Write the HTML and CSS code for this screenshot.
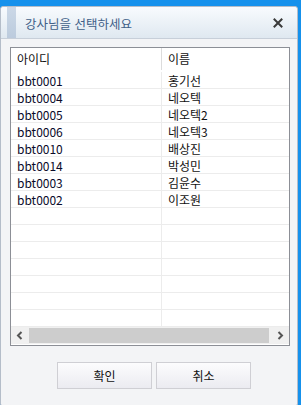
FILE: index.html
```html
<!DOCTYPE html>
<html lang="ko">
<head>
  <meta charset="UTF-8" />
  <meta name="viewport" content="width=device-width, initial-scale=1.0" />
  <title>강사님을 선택하세요</title>
  <link rel="stylesheet" href="styles.css">
</head>
<body>
  <div class="window">
    <div class="title-bar">
      <div class="title-accent"></div>
      <h1 class="title">강사님을 선택하세요</h1>
      <button class="close-button" title="닫기">
        <svg width="10" height="10" viewBox="0 0 10 10">
          <path d="M1.5 1.5 L8.5 8.5 M8.5 1.5 L1.5 8.5" stroke="#3a3a3a" stroke-width="2" stroke-linecap="square" />
        </svg>
      </button>
    </div>

    <div class="content">
      <div class="grid">
        <div class="grid-header">
          <div class="cell col-id">아이디</div>
          <div class="cell col-name">이름</div>
        </div>
        <div class="grid-body">
          <div class="row"><div class="cell col-id">bbt0001</div><div class="cell col-name">홍기선</div></div>
          <div class="row"><div class="cell col-id">bbt0004</div><div class="cell col-name">네오텍</div></div>
          <div class="row"><div class="cell col-id">bbt0005</div><div class="cell col-name">네오텍2</div></div>
          <div class="row"><div class="cell col-id">bbt0006</div><div class="cell col-name">네오텍3</div></div>
          <div class="row"><div class="cell col-id">bbt0010</div><div class="cell col-name">배상진</div></div>
          <div class="row"><div class="cell col-id">bbt0014</div><div class="cell col-name">박성민</div></div>
          <div class="row"><div class="cell col-id">bbt0003</div><div class="cell col-name">김윤수</div></div>
          <div class="row"><div class="cell col-id">bbt0002</div><div class="cell col-name">이조원</div></div>
          <div class="row empty"><div class="cell col-id"></div><div class="cell col-name"></div></div>
          <div class="row empty"><div class="cell col-id"></div><div class="cell col-name"></div></div>
          <div class="row empty"><div class="cell col-id"></div><div class="cell col-name"></div></div>
          <div class="row empty"><div class="cell col-id"></div><div class="cell col-name"></div></div>
          <div class="row empty"><div class="cell col-id"></div><div class="cell col-name"></div></div>
          <div class="row empty"><div class="cell col-id"></div><div class="cell col-name"></div></div>
          <div class="row empty"><div class="cell col-id"></div><div class="cell col-name"></div></div>
        </div>
        <div class="hscroll">
          <div class="scroll-arrow">
            <svg width="8" height="9" viewBox="0 0 8 9"><path d="M5.5 1 L2 4.5 L5.5 8" fill="none" stroke="#555" stroke-width="2" /></svg>
          </div>
          <div class="scroll-track"><div class="scroll-thumb"></div></div>
          <div class="scroll-arrow">
            <svg width="8" height="9" viewBox="0 0 8 9"><path d="M2.5 1 L6 4.5 L2.5 8" fill="none" stroke="#555" stroke-width="2" /></svg>
          </div>
        </div>
      </div>

      <div class="buttons">
        <button class="dialog-button">확인</button>
        <button class="dialog-button">취소</button>
      </div>
    </div>
  </div>
</body>
</html>
```

FILE: styles.css
```css
:root {
  --desktop: #1591ec;
  --window-bg: #f3f4f6;
  --frame: #b4bdc9;
  --title-text: #3f6088;
  --grid-border: #8c8f96;
  --row-line: #ececec;
  --text: #111;
}

body {
  margin: 0;
  background-color: var(--desktop);
  font-family: "Noto Sans CJK KR", "Noto Sans", sans-serif;
  font-size: 12px;
  color: var(--text);
  overflow: hidden;
}

.window {
  margin-top: 6px;
  width: 296px;
  height: 398px;
  background-color: var(--window-bg);
  border: 1px solid var(--frame);
  border-radius: 3px 3px 2px 2px;
  display: flex;
  flex-direction: column;
}

.title-bar {
  height: 31px;
  display: flex;
  align-items: center;
  background: linear-gradient(#f8fbfe, #dfe8f0);
  border-bottom: 1px solid #c7cfd9;
  border-radius: 3px 3px 0 0;
}

.title-accent {
  align-self: stretch;
  width: 9px;
  margin-left: 6px;
  background: linear-gradient(#cbd8e7, #bccbdd);
}

.title {
  flex: 1;
  margin: 1px 0 0 9px;
  font-size: 12.5px;
  font-weight: normal;
  color: var(--title-text);
}

.close-button {
  width: 20px;
  height: 20px;
  margin-right: 9px;
  padding: 0;
  border: none;
  background: transparent;
  display: flex;
  align-items: center;
  justify-content: center;
}

.content {
  flex: 1;
  padding: 8px 7px 0 9px;
  display: flex;
  flex-direction: column;
}

.grid {
  width: 278px;
  height: 297px;
  border: 1px solid var(--grid-border);
  background-color: #fff;
  display: flex;
  flex-direction: column;
}

.grid-header {
  height: 24px;
  display: flex;
}

.grid-header .cell {
  line-height: 22px;
}

.grid-header .col-id {
  border-right: 1px solid #dcdcdc;
  height: 22px;
}

.cell {
  padding-left: 6px;
  white-space: nowrap;
  overflow: hidden;
}

.col-id {
  width: 144px;
  border-right: 1px solid var(--row-line);
}

.col-name {
  flex: 1;
}

.grid-body {
  flex: 1;
}

.row {
  height: 16px;
  display: flex;
  border-bottom: 1px solid var(--row-line);
}

.row .cell {
  padding-top: 1px;
  line-height: 15px;
}

.row .col-id {
  color: #0a0a2a;
}

.hscroll {
  height: 17px;
  display: flex;
  background-color: #f0f0f0;
  margin-bottom: 1px;
}

.scroll-arrow {
  width: 18px;
  display: flex;
  align-items: center;
  justify-content: center;
}

.scroll-track {
  flex: 1;
  display: flex;
  align-items: stretch;
  padding: 1px 0;
}

.scroll-thumb {
  width: 240px;
  background-color: #cdcdcd;
}

.buttons {
  display: flex;
  gap: 4px;
  margin-top: 16px;
  padding-left: 47px;
}

.dialog-button {
  width: 95px;
  height: 27px;
  font-family: inherit;
  font-size: 12px;
  color: #111;
  background: linear-gradient(#fcfcfd, #ebebf1);
  border: 1px solid #cfcfd4;
  border-radius: 0;
  cursor: pointer;
}
```
